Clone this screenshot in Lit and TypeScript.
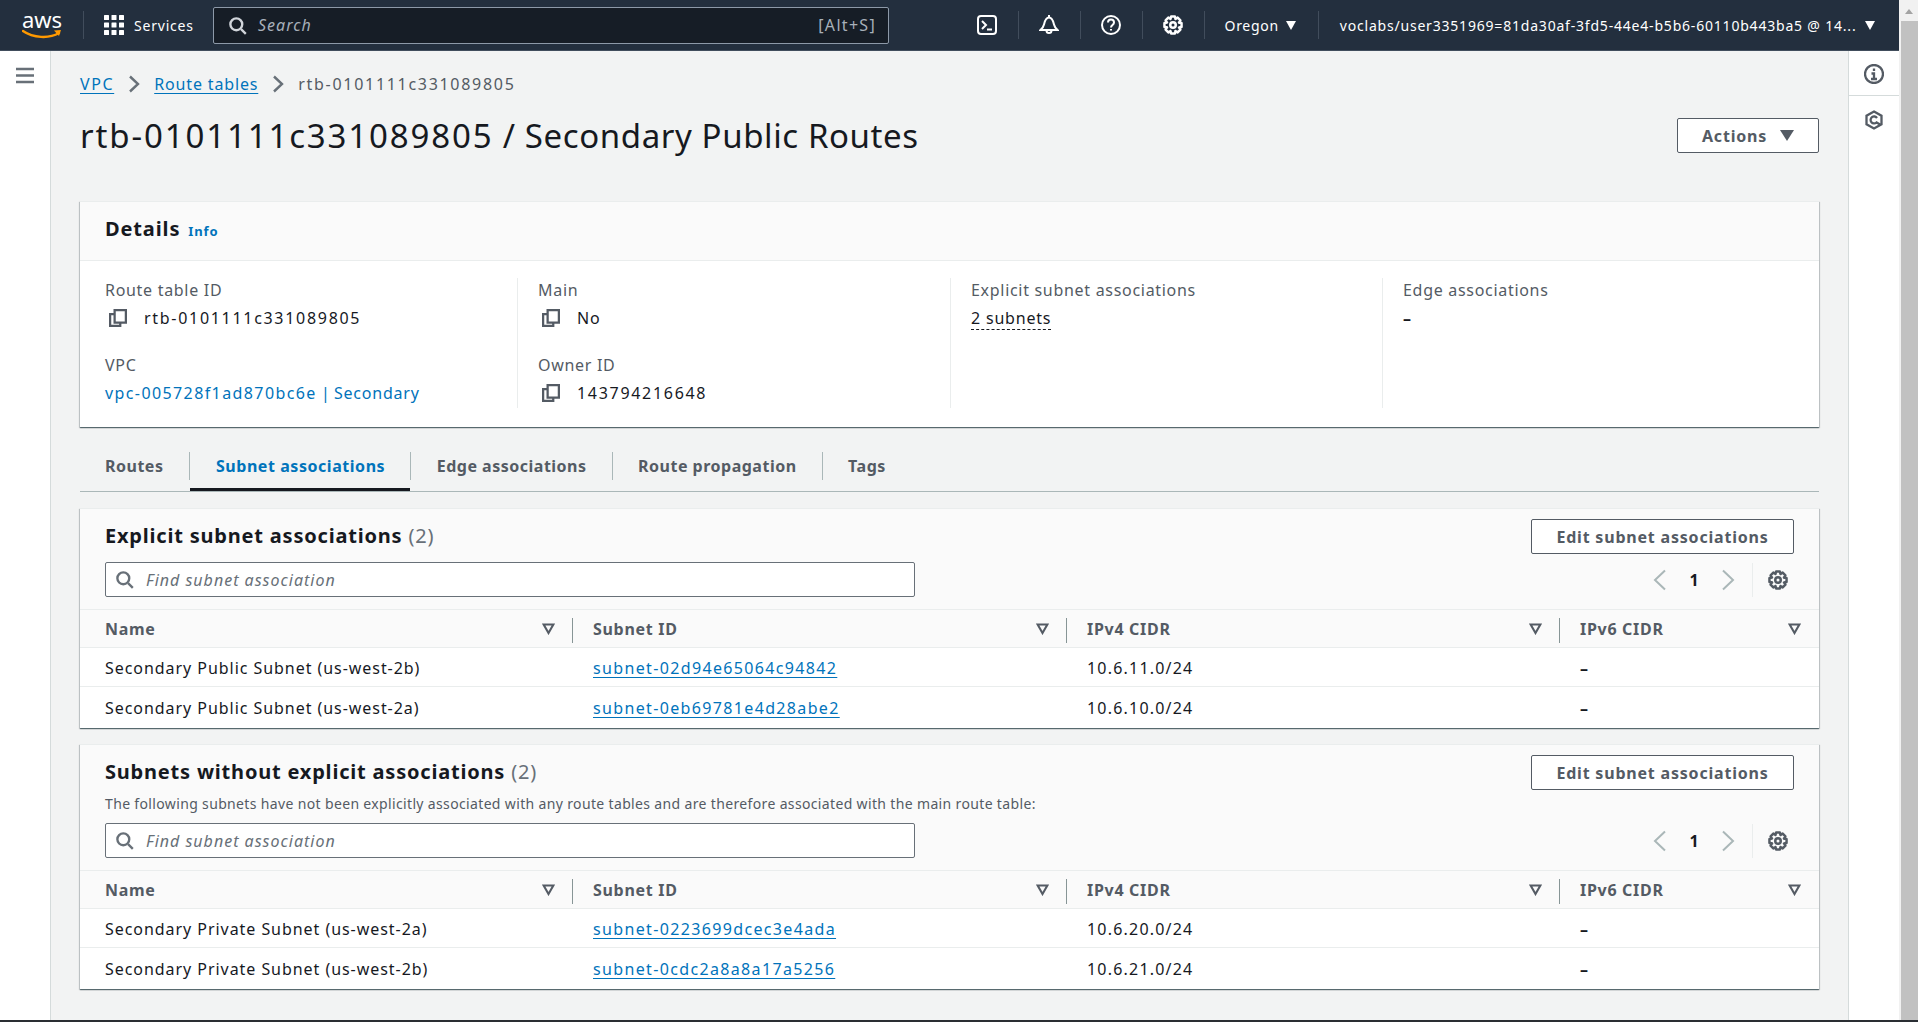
import { LitElement, css, html, svg } from "lit";
import { customElement, property } from "lit/decorators.js";

// 8 shallow teeth round a 16x16 box, the reference cog is rounder than the usual settings path
function gearOutline(): string {
    const pts: string[] = [];
    for (let i = 0; i < 8; i++) {
        const a = (i * Math.PI) / 4;
        for (const [r, d] of [[5.2, -0.4], [7, -0.22], [7, 0.22], [5.2, 0.4]]) {
            pts.push(`${(8 + r * Math.sin(a + d)).toFixed(2)},${(8 - r * Math.cos(a + d)).toFixed(2)}`);
        }
    }
    return pts.join(" ");
}

const gear = svg`<polygon stroke-linejoin="round" points=${gearOutline()}/><circle cx="8" cy="8" r="2.200"/>`;
const search = svg`<circle cx="7" cy="7" r="5"/><path d="M11 11l4 4"/>`;
const copy = svg`<path d="M5 4.500H1V15h9v-3"/><path d="M5 1h10v11H5z"/>`;

function icon(body: unknown, size = 16) {
    return html`<svg class="icon" width=${size} height=${size} viewBox="0 0 16 16">${body}</svg>`;
}

@customElement("top-bar")
export class TopBar extends LitElement {
    render() {
        return html`
            <div class="logo">
                <span>aws</span>
                <svg width="40" height="11" viewBox="0 0 40 11">
                    <path d="M1 2c10 7 26 8 36 2" fill="none" stroke="#f90" stroke-width="2.400" stroke-linecap="round"/>
                    <path d="M32 1.500l7-.5-2 6z" fill="#f90"/>
                </svg>
            </div>
            <i class="sep first"></i>
            <div class="services">
                <svg width="20" height="20" viewBox="0 0 20 20" fill="#fff">
                    ${[0, 7.5, 15].map((y) => [0, 7.5, 15].map((x) => svg`<rect x=${x} y=${y} width="5" height="5" rx="0.500"/>`))}
                </svg>
                <span>Services</span>
            </div>
            <div class="search">
                ${icon(search, 19)}
                <em>Search</em>
                <span>[Alt+S]</span>
            </div>
            <div class="tool first-tool">
                <svg class="icon" width="20" height="20" viewBox="0 0 20 20"><rect x="1" y="1" width="18" height="18" rx="3"/><path d="M5 6l4 4-4 4M10 14.500h5"/></svg>
            </div>
            <i class="sep"></i>
            <div class="tool">
                <svg class="icon" width="20" height="20" viewBox="0 0 20 20"><path d="M1.500 15h17c-2-2-3-3-3.500-5.500C14 5 13 2.500 10 2.500S6 5 5 9.500C4.500 12 3.500 13 1.500 15z"/><path d="M10 0v2.500M7.500 15.500a2.500 2.500 0 0 0 5 0"/></svg>
            </div>
            <i class="sep"></i>
            <div class="tool">
                <svg class="icon" width="20" height="20" viewBox="0 0 20 20"><circle cx="10" cy="10" r="9"/><path d="M7 7.500c0-4 6-4 6 0 0 2.500-3 2.500-3 5"/><path d="M10 14v1.500"/></svg>
            </div>
            <i class="sep"></i>
            <div class="tool">${icon(gear, 20)}</div>
            <i class="sep"></i>
            <div class="menu region">Oregon <b></b></div>
            <i class="sep"></i>
            <div class="menu user">voclabs/user3351969=81da30af-3fd5-44e4-b5b6-60110b443ba5 @ 14...<b></b></div>
        `;
    }

    static styles = css`
        :host {
            display: flex;
            align-items: center;
            flex: none;
            height: 50px;
            background: #232f3e;
            border-bottom: 1px solid #414d5c;
            color: #fff;
            font-family: "Noto Sans", sans-serif;
            font-size: 14px;
            letter-spacing: 0.8px;
        }
        .icon {
            fill: none;
            stroke: currentColor;
            stroke-width: 2;
            flex: none;
        }
        .logo {
            display: flex;
            flex-direction: column;
            align-items: center;
            width: 40px;
            margin-left: 22px;
            height: 36px;
        }
        .logo span {
            font-size: 22px;
            line-height: 22px;
            letter-spacing: 0;
            margin-top: 1px;
        }
        .logo svg {
            margin-top: -1px;
        }
        .sep {
            width: 1px;
            height: 28px;
            background: #414d5c;
            flex: none;
        }
        .sep.first {
            margin-left: 21px;
        }
        .services {
            display: flex;
            align-items: center;
            gap: 10px;
            margin-left: 20px;
            width: 109px;
        }
        .search {
            display: flex;
            align-items: center;
            box-sizing: border-box;
            width: 676px;
            height: 37px;
            padding: 0 12px 0 14px;
            background: #161d26;
            border: 1px solid #8d99a8;
            border-radius: 2px;
            color: #d1d5db;
            font-size: 16px;
        }
        .search em {
            margin-left: 11px;
            flex: 1;
            color: #a8b0ba;
            letter-spacing: 1px;
        }
        .search span {
            color: #a8b0ba;
            letter-spacing: 1.300px;
        }
        .tool {
            display: flex;
            justify-content: center;
            width: 20px;
            padding: 0 20.500px;
        }
        .first-tool {
            margin-left: 66px;
            padding-left: 22px;
        }
        .menu {
            display: flex;
            align-items: center;
            white-space: nowrap;
        }
        .menu b {
            width: 0;
            height: 0;
            border: 5.500px solid transparent;
            border-top: 9px solid #fff;
            border-bottom: 0;
        }
        .region {
            gap: 7px;
            padding: 0 22px 0 20px;
            letter-spacing: 0.7px;
        }
        .user {
            margin-left: 21px;
            width: 535px;
            justify-content: space-between;
        }
    `;
}

interface SubnetRow {
    name: string;
    id: string;
    cidr: string;
}

@customElement("subnet-card")
export class SubnetCard extends LitElement {
    @property() heading = "";
    @property() description = "";
    @property({ attribute: false }) rows: SubnetRow[] = [];

    render() {
        return html`
            <div class="head">
                <div class="title-row">
                    <h2>${this.heading} <span>(${this.rows.length})</span></h2>
                    <button>Edit subnet associations</button>
                </div>
                ${this.description ? html`<p>${this.description}</p>` : ""}
                <div class="filter-row">
                    <div class="find">${icon(search, 19)}<em>Find subnet association</em></div>
                    <div class="pager">
                        <svg class="icon dim" width="14" height="22" viewBox="0 0 14 22"><path d="M12 1.500L2 11l10 9.500"/></svg>
                        <strong>1</strong>
                        <svg class="icon dim" width="14" height="22" viewBox="0 0 14 22"><path d="M2 1.500L12 11 2 20.500"/></svg>
                        <i></i>
                        ${icon(gear, 20)}
                    </div>
                </div>
            </div>
            <div class="thead row">
                ${["Name", "Subnet ID", "IPv4 CIDR", "IPv6 CIDR"].map(
                    (c, i) => html`<div class="th">
                        <span>${c}</span>
                        <svg class="icon sort" width="13" height="13" viewBox="0 0 16 16"><path d="M2 3h12L8 13.500z"/></svg>
                        ${i < 3 ? html`<i></i>` : ""}
                    </div>`
                )}
            </div>
            ${this.rows.map(
                (r) => html`<div class="tr row">
                    <div class="name">${r.name}</div>
                    <div><a>${r.id}</a></div>
                    <div class="cidr">${r.cidr}</div>
                    <div class="dash">–</div>
                </div>`
            )}
        `;
    }

    static styles = css`
        :host {
            display: block;
            background: #fff;
            border-top: 1px solid #eaeded;
            box-shadow: 0 1px 1px 0 rgba(0, 28, 36, 0.5), 1px 1px 1px 0 rgba(0, 28, 36, 0.15),
                -1px 1px 1px 0 rgba(0, 28, 36, 0.15);
        }
        .icon {
            fill: none;
            stroke: currentColor;
            stroke-width: 2;
            flex: none;
        }
        .head {
            background: #fafafa;
            padding: 10px 25px 12px;
        }
        .title-row {
            display: flex;
            align-items: center;
            justify-content: space-between;
            height: 35px;
            margin-bottom: 8px;
        }
        h2 {
            margin: -2px 0 0;
            font-size: 20px;
            font-weight: 700;
            letter-spacing: 0.8px;
            color: #16191f;
        }
        h2 span {
            font-weight: 400;
            color: #687078;
        }
        p {
            margin: -3px 0 10px;
            font-size: 14px;
            line-height: 18px;
            letter-spacing: 0.35px;
            color: #545b64;
        }
        button {
            box-sizing: border-box;
            width: 263px;
            height: 35px;
            border: 1px solid #545b64;
            border-radius: 2px;
            background: #fff;
            color: #545b64;
            font: 700 16px "Noto Sans", sans-serif;
            letter-spacing: 0.8px;
        }
        .filter-row {
            display: flex;
            align-items: center;
            justify-content: space-between;
        }
        .find {
            display: flex;
            align-items: center;
            box-sizing: border-box;
            width: 810px;
            height: 35px;
            padding-left: 9px;
            gap: 12px;
            background: #fff;
            border: 1px solid #687078;
            border-radius: 2px;
            color: #687078;
        }
        .find em {
            font-size: 16px;
            letter-spacing: 1px;
        }
        .pager {
            display: flex;
            align-items: center;
            margin-right: 6px;
            color: #545b64;
        }
        .pager .dim {
            color: #aab7b8;
        }
        .pager strong {
            width: 54px;
            text-align: center;
            color: #16191f;
            font-size: 16px;
        }
        .pager i {
            width: 1px;
            height: 34px;
            background: #eaeded;
            margin: 0 15px 0 17px;
        }
        .row {
            display: grid;
            grid-template-columns: 493px 494px 493px 1fr;
            align-items: center;
        }
        .thead {
            height: 37px;
            background: #fafafa;
            border-top: 1px solid #eaeded;
            border-bottom: 1px solid #eaeded;
            font-weight: 700;
            letter-spacing: 0.7px;
            color: #545b64;
        }
        .th {
            display: flex;
            align-items: center;
            justify-content: space-between;
            position: relative;
            padding: 0 18.500px 0 20px;
        }
        .th:first-child {
            padding-left: 25px;
        }
        .th i {
            position: absolute;
            right: 0;
            top: 0;
            height: 25px;
            width: 1px;
            background: #879596;
        }
        .sort {
            stroke-width: 2.600;
            color: #545b64;
        }
        .tr {
            box-sizing: border-box;
            height: 39px;
            padding-top: 2px;
            border-bottom: 1px solid #eaeded;
            color: #16191f;
        }
        .tr:last-child {
            height: 41px;
            padding-top: 0;
            border-bottom: 0;
        }
        .tr > div {
            padding-left: 20px;
        }
        .tr > div:first-child {
            padding-left: 25px;
        }
        .name {
            letter-spacing: 0.95px;
        }
        .cidr {
            letter-spacing: 1.200px;
        }
        .dash {
            font-weight: 700;
        }
        a {
            color: #0073bb;
            text-decoration: underline;
            text-underline-offset: 3px;
            letter-spacing: 1.350px;
        }
    `;
}

@customElement("app-root")
export class AppRoot extends LitElement {
    render() {
        return html`
            <div class="window">
                <div class="page">
                    <top-bar></top-bar>
                    <div class="body">
                        <aside class="nav">
                            <svg class="icon" width="18" height="20" viewBox="0 0 18 20"><path d="M0 3h18M0 9.500h18M0 16h18"/></svg>
                        </aside>
                        <main>
                            <nav class="crumbs">
                                <a class="short">VPC</a>
                                <svg class="icon" width="12" height="18" viewBox="0 0 12 18"><path d="M2 1.500l8 7.500-8 7.500"/></svg>
                                <a>Route tables</a>
                                <svg class="icon" width="12" height="18" viewBox="0 0 12 18"><path d="M2 1.500l8 7.500-8 7.500"/></svg>
                                <span>rtb-0101111c331089805</span>
                            </nav>
                            <header class="title">
                                <h1><span>rtb-0101111c331089805</span> / Secondary Public Routes</h1>
                                <button>Actions <b></b></button>
                            </header>
                            <section class="details">
                                <div class="details-head">
                                    <h2>Details</h2><a class="info">Info</a>
                                </div>
                                <div class="details-grid">
                                    <div class="col">
                                        <div class="kv">
                                            <label>Route table ID</label>
                                            <div class="val">${icon(copy, 18)}<span class="mono">rtb-0101111c331089805</span></div>
                                        </div>
                                        <div class="kv">
                                            <label>VPC</label>
                                            <div class="val"><a class="plain"><span class="vpc-id">vpc-005728f1ad870bc6e</span> | <span>Secondary</span></a></div>
                                        </div>
                                    </div>
                                    <div class="col">
                                        <div class="kv">
                                            <label>Main</label>
                                            <div class="val">${icon(copy, 18)}<span>No</span></div>
                                        </div>
                                        <div class="kv">
                                            <label>Owner ID</label>
                                            <div class="val">${icon(copy, 18)}<span class="mono">143794216648</span></div>
                                        </div>
                                    </div>
                                    <div class="col">
                                        <div class="kv">
                                            <label>Explicit subnet associations</label>
                                            <div class="val"><span class="dotted">2 subnets</span></div>
                                        </div>
                                    </div>
                                    <div class="col">
                                        <div class="kv">
                                            <label>Edge associations</label>
                                            <div class="val"><span class="dash">–</span></div>
                                        </div>
                                    </div>
                                </div>
                            </section>
                            <div class="tabs">
                                <div class="tab">Routes</div>
                                <div class="tab active">Subnet associations</div>
                                <div class="tab">Edge associations</div>
                                <div class="tab">Route propagation</div>
                                <div class="tab">Tags</div>
                            </div>
                            <subnet-card
                                class="first"
                                heading="Explicit subnet associations"
                                .rows=${[
                                    { name: "Secondary Public Subnet (us-west-2b)", id: "subnet-02d94e65064c94842", cidr: "10.6.11.0/24" },
                                    { name: "Secondary Public Subnet (us-west-2a)", id: "subnet-0eb69781e4d28abe2", cidr: "10.6.10.0/24" },
                                ]}
                            ></subnet-card>
                            <subnet-card
                                class="second"
                                heading="Subnets without explicit associations"
                                description="The following subnets have not been explicitly associated with any route tables and are therefore associated with the main route table:"
                                .rows=${[
                                    { name: "Secondary Private Subnet (us-west-2a)", id: "subnet-0223699dcec3e4ada", cidr: "10.6.20.0/24" },
                                    { name: "Secondary Private Subnet (us-west-2b)", id: "subnet-0cdc2a8a8a17a5256", cidr: "10.6.21.0/24" },
                                ]}
                            ></subnet-card>
                        </main>
                        <aside class="tools">
                            <div class="tools-btn">
                                <svg class="icon" width="20" height="20" viewBox="0 0 20 20"><circle cx="10" cy="10" r="9"/><path d="M10 4.500v2.500M7.500 9.500h2.500V15M7 15h6"/></svg>
                            </div>
                            <div class="tools-btn">
                                <svg class="icon" width="20" height="20" viewBox="0 0 20 20"><path d="M10 1.500l7.500 4.200v8.600L10 18.500l-7.500-4.200V5.700z"/><path d="M13 8a3.500 3.500 0 1 0-.5 4.500L17 15"/></svg>
                            </div>
                        </aside>
                    </div>
                </div>
                <div class="scrollbar">
                    <div class="arrow"></div>
                    <div class="thumb"></div>
                </div>
            </div>
            <div class="edge"></div>
        `;
    }

    static styles = css`
        :host {
            display: flex;
            flex-direction: column;
            height: 1022px;
            overflow: hidden;
            background: #f2f3f3;
            font-family: "Noto Sans", sans-serif;
            font-size: 16px;
            color: #16191f;
        }
        .icon {
            fill: none;
            stroke: currentColor;
            stroke-width: 2;
            flex: none;
        }
        .window {
            display: flex;
            flex: 1;
            min-height: 0;
        }
        .edge {
            flex: none;
            height: 2px;
            background: #2a2e33;
        }
        .page {
            display: flex;
            flex-direction: column;
            flex: 1;
            min-width: 0;
        }
        .body {
            display: flex;
            flex: 1;
            min-height: 0;
        }
        .nav {
            flex: none;
            box-sizing: border-box;
            width: 51px;
            background: #fff;
            border-right: 1px solid #d5dbdb;
            padding: 15px 0 0 16px;
            color: #687078;
        }
        .nav .icon {
            stroke-width: 2.500;
        }
        main {
            flex: 1;
            min-width: 0;
            padding: 0 29px;
        }
        .crumbs {
            display: flex;
            align-items: center;
            gap: 14px;
            height: 20px;
            margin-top: 23px;
        }
        .crumbs a {
            color: #0073bb;
            text-decoration: underline;
            text-underline-offset: 3px;
            letter-spacing: 0.85px;
        }
        .crumbs a.short {
            letter-spacing: 1.600px;
        }
        .crumbs .icon {
            color: #687078;
            stroke-width: 2.400;
        }
        .crumbs span {
            color: #545b64;
            letter-spacing: 1.700px;
        }
        .title {
            display: flex;
            align-items: center;
            justify-content: space-between;
            height: 35px;
            margin-top: 24px;
        }
        h1 {
            margin: -1px 0 0;
            font-size: 33px;
            font-weight: 400;
            letter-spacing: 0.600px;
            color: #16191f;
            white-space: nowrap;
        }
        h1 span {
            letter-spacing: 1.870px;
        }
        .title button {
            display: flex;
            align-items: center;
            justify-content: center;
            gap: 13px;
            box-sizing: border-box;
            width: 142px;
            height: 35px;
            background: #fff;
            border: 1px solid #545b64;
            border-radius: 2px;
            color: #545b64;
            font: 700 16px "Noto Sans", sans-serif;
            letter-spacing: 0.8px;
        }
        .title button b {
            border: 7px solid transparent;
            border-top: 11px solid #545b64;
            border-bottom: 0;
        }
        .details {
            margin-top: 48px;
            background: #fff;
            border-top: 1px solid #eaeded;
            box-shadow: 0 1px 1px 0 rgba(0, 28, 36, 0.5), 1px 1px 1px 0 rgba(0, 28, 36, 0.15),
                -1px 1px 1px 0 rgba(0, 28, 36, 0.15);
        }
        .details-head {
            display: flex;
            align-items: baseline;
            gap: 8px;
            height: 59px;
            box-sizing: border-box;
            padding: 13px 25px 0;
            background: #fafafa;
            border-bottom: 1px solid #eaeded;
        }
        .details-head h2 {
            margin: 0;
            font-size: 20px;
            font-weight: 700;
            letter-spacing: 0.87px;
        }
        .info {
            color: #0073bb;
            font-size: 13px;
            font-weight: 700;
            letter-spacing: 0.9px;
        }
        .details-grid {
            display: grid;
            grid-template-columns: 437px 433px 432px 1fr;
            padding: 17px 0 19px;
            height: 166px;
            box-sizing: border-box;
        }
        .col {
            display: flex;
            flex-direction: column;
            gap: 20px;
            padding-left: 20px;
            border-left: 1px solid #eaeded;
        }
        .col:first-child {
            border-left: 0;
            padding-left: 25px;
        }
        .kv label {
            display: block;
            height: 25px;
            line-height: 24px;
            letter-spacing: 0.7px;
            color: #545b64;
        }
        .val {
            display: flex;
            align-items: center;
            gap: 17px;
            height: 30px;
        }
        .val .icon {
            color: #545b64;
            margin-left: 4px;
        }
        .val span {
            letter-spacing: 0.8px;
        }
        .val .mono {
            letter-spacing: 1.700px;
        }
        .val .vpc-id {
            letter-spacing: 1.400px;
        }
        .val .dash {
            font-weight: 700;
        }
        .plain {
            color: #0073bb;
        }
        .dotted {
            border-bottom: 1px dashed #16191f;
        }
        .tabs {
            display: flex;
            align-items: flex-start;
            height: 39px;
            padding-top: 25px;
            border-bottom: 1px solid #aab7b8;
        }
        .tab {
            display: flex;
            align-items: center;
            box-sizing: border-box;
            height: 28px;
            padding: 0 25px 0 25.500px;
            font-weight: 700;
            letter-spacing: 0.5px;
            color: #545b64;
            border-left: 1px solid #aab7b8;
            position: relative;
        }
        .tab:first-child {
            border-left: 0;
            padding-left: 25px;
            padding-right: 26px;
        }
        .active {
            color: #0073bb;
            letter-spacing: 0.55px;
        }
        .active::after {
            content: "";
            position: absolute;
            left: 0;
            right: 0;
            top: 36px;
            height: 3px;
            background: #16191f;
        }
        .first {
            margin-top: 16px;
        }
        .second {
            margin-top: 16px;
        }
        .tools {
            flex: none;
            box-sizing: border-box;
            width: 51px;
            background: #fff;
            border-left: 1px solid #d5dbdb;
            color: #545b64;
        }
        .tools .icon {
            stroke-width: 2.300;
        }
        .tools-btn {
            display: flex;
            justify-content: center;
            box-sizing: border-box;
            padding-top: 13px;
            height: 45px;
            border-bottom: 1px solid #d5dbdb;
        }
        .tools-btn:last-child {
            border-bottom: 0;
            padding-top: 14px;
        }
        .scrollbar {
            display: flex;
            flex-direction: column;
            flex: none;
            width: 19px;
            background: #f1f1f1;
        }
        .arrow {
            height: 21px;
            flex: none;
            position: relative;
        }
        .arrow::after {
            content: "";
            position: absolute;
            left: 6px;
            top: 9px;
            border: 4.500px solid transparent;
            border-bottom: 5px solid #a3a3a3;
            border-top: 0;
        }
        .thumb {
            flex: 1;
            margin-left: 2px;
            background: #c1c1c1;
        }
    `;
}
